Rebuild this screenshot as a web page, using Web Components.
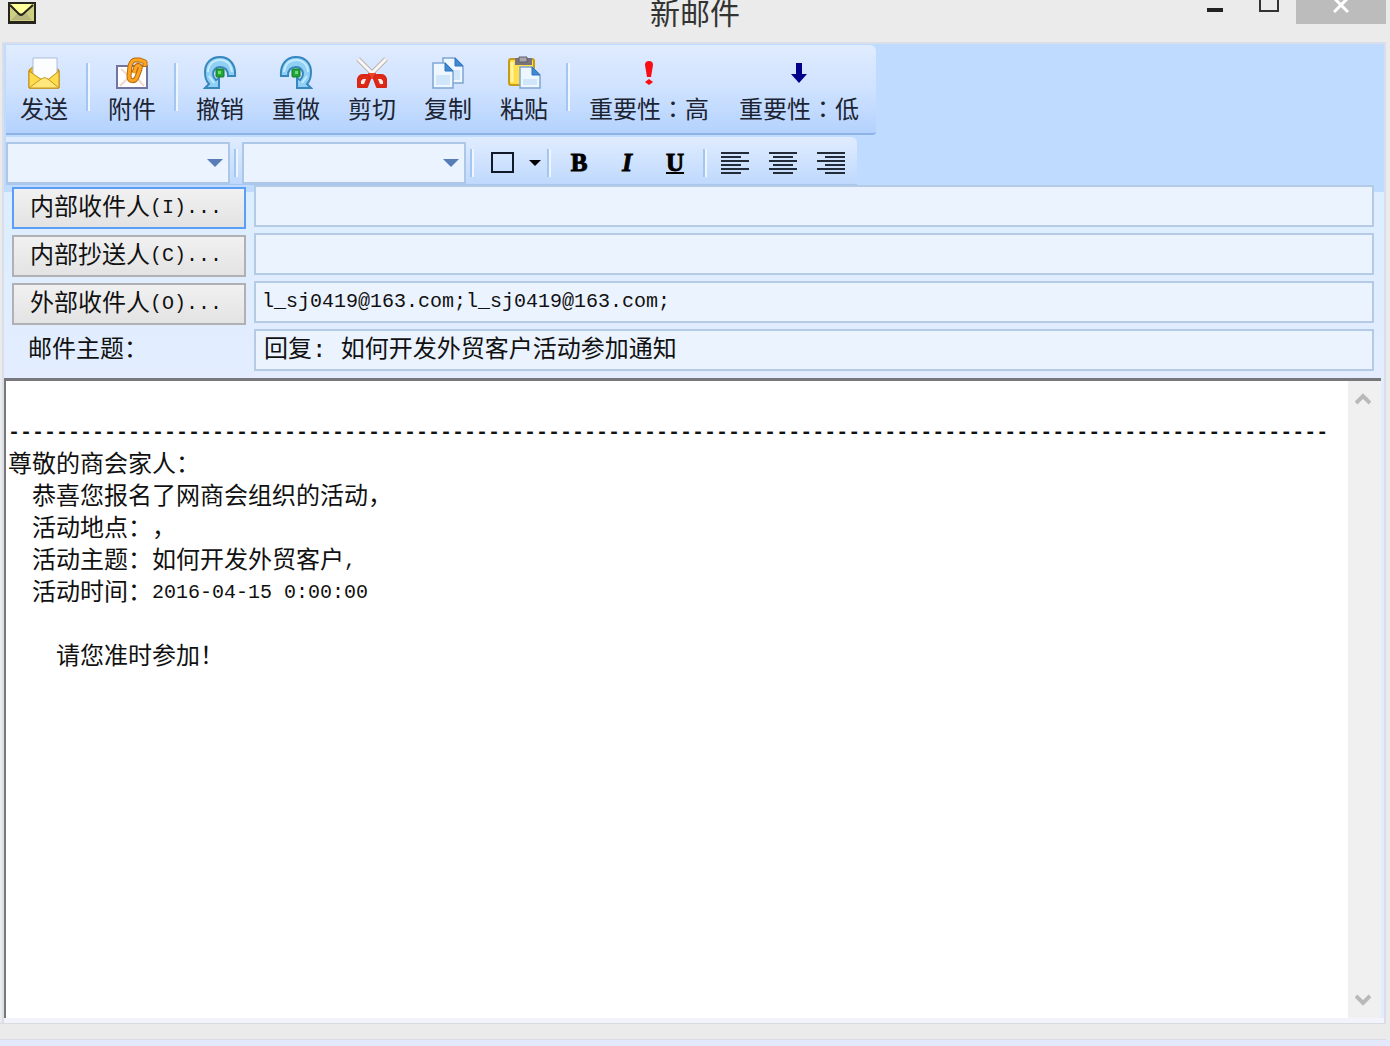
<!DOCTYPE html>
<html lang="zh-CN">
<head>
<meta charset="utf-8">
<title>新邮件</title>
<style>
html, body { margin: 0; height: 100%; }
body { background: #ebebeb; font-family: "Noto Sans CJK SC", sans-serif; color: #111; text-spacing-trim: space-all; }
</style>
</head>
<body>
<mail-window>
  <title-bar slot="title">新邮件</title-bar>
  <main-toolbar slot="tools"></main-toolbar>
  <format-toolbar slot="tools"></format-toolbar>
  <mail-field slot="fields" kind="button" label="内部收件人" key="(I)..." active></mail-field>
  <mail-field slot="fields" kind="button" label="内部抄送人" key="(C)..."></mail-field>
  <mail-field slot="fields" kind="button" label="外部收件人" key="(O)..." latin value="l_sj0419@163.com;l_sj0419@163.com;"></mail-field>
  <mail-field slot="fields" label="邮件主题：" value="回复: 如何开发外贸客户活动参加通知"></mail-field>
  <mail-editor slot="editor"></mail-editor>
</mail-window>

<script>
const define = (name, html, setup) => {
  const template = document.createElement('template');
  template.innerHTML = html;
  customElements.define(name, class extends HTMLElement {
    connectedCallback() {
      if (this.shadowRoot) return;
      const root = this.attachShadow({ mode: 'open' });
      root.append(template.content.cloneNode(true));
      if (setup) setup(this, root);
    }
  });
};

const svg = (w, h, body) => `<svg width="${w}" height="${h}" viewBox="0 0 ${w} ${h}" aria-hidden="true">${body}</svg>`;

const undoShape = `
  <path d="M2 16C2 7 8 1 17 1c9 0 16 7 15 19h-7c0-6-3-9-8-9-4 0-7 3-7 7 0 2 1 4 3 6l3-2v10H2l4-4c-3-3-4-7-4-12z" fill="#8fd0f4" stroke="#3787bd" stroke-width="2"/>
  <path d="M5 16C5 9 10 4 17 4c7 0 11 4 12 12M6 20l5 7" fill="none" stroke="#c4ebff" stroke-width="2"/>
  <rect x="13" y="13" width="8" height="8" rx="1" fill="#24a43c" stroke="#0c7a26"/><path d="M15 15h3v3h-3z" fill="#6edc70"/>`;

const page = (x, y, w, h) => `<path d="M${x} ${y}h${w - 8}l8 8v${h - 8}h-${w}z" fill="#eef7ff" stroke="#7fa5d3" stroke-width="1.5"/>
  <path d="M${x + w - 8} ${y}v8h8z" fill="#3e8bd3" stroke="#2c73bd"/><path d="M${x + 3} ${y + 12}h${w - 6}v${h - 15}h-${w - 6}z" fill="#cfe6fb"/>`;

const icons = {
  send: svg(32, 32, `<path d="M1 13 6 9h20l5 4v18H1z" fill="#e9b71f" stroke="#b98410"/>
    <path d="M5 1h24v17l-12 8L5 18z" fill="#fbfdff" stroke="#aebedb"/>
    <path d="M1 14l16 11 14-11v17H1z" fill="#ffdc4c" stroke="#c18d14"/>
    <path d="M1 31l12-9q4-3 7 0l11 9z" fill="#ffe77c" stroke="#c99719"/>`),
  attach: svg(32, 32, `<path d="M1 9h30v22H1z" fill="#fff" stroke="#7474a2" stroke-width="2"/><path d="M5 12l9 8M4 29l8-8M28 29l-7-8" fill="none" stroke="#f0d8cc" stroke-width="2"/>
    <g fill="none" stroke-linejoin="round"><path d="M29 10V5L24 3h-5c-3 0-4 3-5 6l-1 10c0 6 6 6 8 1l3-8c1-3-2-5-4-2l-2 6" stroke="#b86a10" stroke-width="5"/>
    <path d="M29 9V5L24 3h-5c-3 0-4 3-5 6l-1 10c0 6 6 6 8 1l3-8c1-3-2-5-4-2l-2 6" stroke="#ffa51e" stroke-width="3"/></g>`),
  undo: svg(34, 34, undoShape),
  redo: svg(34, 34, `<g transform="matrix(-1 0 0 1 34 0)">${undoShape}</g>`),
  cut: svg(34, 34, `<path d="M3 3l16 16M31 3L15 19" stroke="#b8b3b4" stroke-width="5"/><path d="M3 3l16 16M31 3L15 19" stroke="#faf7f5" stroke-width="3"/>
    <path d="M13 17h8v6h-8z" fill="#e8442e"/>
    <path d="M3 31v-8q1-4 5-4h4q3 0 3 4l-3 8zM31 31v-8q-1-4-5-4h-4q-3 0-3 4l3 8z" fill="#e02a18" stroke="#d92514" stroke-width="2" stroke-linejoin="round"/>
    <path d="M6 28v-3l2-2h3l-2 5zM28 28v-3l-2-2h-3l2 5z" fill="#fff0ec"/>`),
  copy: svg(34, 34, page(12, 2, 20, 25) + page(2, 7, 20, 25)),
  paste: svg(34, 34, `<rect x="2" y="3" width="25" height="26" rx="2" fill="#ffe04c" stroke="#c99a18" stroke-width="2"/><path d="M5 6v20" stroke="#fff5a5" stroke-width="3"/>
    <path d="M8 2h17v7H8z" fill="#77727c"/><path d="M12 1h8v5h-8z" fill="#aaa5aa" stroke="#625e66"/>` + page(13, 11, 20, 21)),
  high: svg(12, 28, `<path d="M2 6q0-4 4-4t4 4L8 18H4z" fill="#f80d12"/><path d="M6 20l4 3-4 3-4-3z" fill="#f80d12"/>`),
  low: svg(16, 28, `<path d="M5 4h6v11h5l-8 9-8-9h5z" fill="#00008b"/>`)
};

define('mail-window', `
  <style>
    :host { display: flex; flex-direction: column; min-height: 100vh; }
    .client { flex: 1; display: flex; flex-direction: column; margin: 0 4px 0 2px; border: solid #d9dee8; border-width: 2px 2px 0; background: #e0edff; }
    .tools { display: flex; flex-direction: column; align-items: flex-start; gap: 2px; padding: 1px 0 0 2px; background: #bfdbff; }
    .fields { display: flex; flex-direction: column; gap: 4px; padding: 0 10px 5px 8px; background: linear-gradient(#bfdbff 0 7px, #dceeff 7px, #e3edff); }
    .editor { flex: 1; display: flex; margin-right: 3px; }
    .edge { height: 5px; background: #f3f3fc; }
    .frame { height: 15px; margin-right: 4px; border: solid #d8dbe2; border-width: 1px 0; }
    .below { height: 6px; background: #e3e9fb; }
  </style>
  <slot name="title"></slot>
  <div class="client">
    <div class="tools"><slot name="tools"></slot></div>
    <div class="fields"><slot name="fields"></slot></div>
    <div class="editor"><slot name="editor"></slot></div>
    <div class="edge"></div>
  </div>
  <div class="frame"></div>
  <div class="below"></div>`);

define('title-bar', `
  <style>
    :host { display: grid; grid-template-columns: 1fr auto 1fr; align-items: start; height: 42px; }
    h1 { margin: 0; font-size: 30px; line-height: 22px; font-weight: 400; color: #333; }
    .icon { padding: 2px 0 0 8px; }
    .controls { display: flex; justify-content: flex-end; padding-right: 4px; }
    button { display: flex; justify-content: center; width: 54px; height: 24px; padding: 0; border: 0; background: none; }
    .close { width: 90px; background: #bcbcbc; }
    svg { display: block; }
  </style>
  <div class="icon">${svg(28, 22, `<path d="M0 0h28v22H0z" fill="#25251c"/><path d="M2 2h24v17H2z" fill="#cfcf83"/><path d="M3 2h21l-9 11h-3z" fill="#ffff9c"/><path d="M3 18l7-7h8l6 7z" fill="#b9b67c"/><path d="M2 3l9 9q2 2 4 0L25 3" fill="none" stroke="#27271e" stroke-width="2"/>`)}</div>
  <h1><slot></slot></h1>
  <div class="controls">
    <button aria-label="最小化">${svg(16, 24, '<path d="M0 8h16v4H0z" fill="#222"/>')}</button>
    <button aria-label="最大化">${svg(20, 24, '<path d="M1-4v15h18V-4" fill="none" stroke="#333" stroke-width="2"/>')}</button>
    <button class="close" aria-label="关闭">${svg(16, 24, '<path d="M1-2l14 14M15-2L1 12" stroke="#fff" stroke-width="3"/>')}</button>
  </div>`);

define('tool-separator', `
  <style>
    :host { display: flex; justify-content: center; flex: none; width: 12px; }
    i { width: 2px; border-right: 2px solid #edf5ff; background: #a5c6f1; }
  </style><i></i>`);

define('tool-button', `
  <style>
    :host { display: block; }
    button { display: flex; flex-direction: column; align-items: center; gap: 4px; padding: 11px 14px 0; border: 0; background: none; font: inherit; font-size: 24px; line-height: 28px; color: #1c2433; white-space: nowrap; }
    :host([wide]) button { padding: 11px 15px 0; }
    .icon { display: flex; align-items: center; justify-content: center; height: 34px; }
    svg { display: block; }
    .mid { font-family: "Noto Sans CJK TC", sans-serif; }
  </style>
  <button><span class="icon"></span><span class="text"></span></button>`,
  (host, root) => {
    root.querySelector('.icon').innerHTML = icons[host.getAttribute('icon')];
    root.querySelector('.text').innerHTML = host.getAttribute('label').replace('：', '<span class="mid" lang="zh-TW">：</span>');
  });

define('main-toolbar', `
  <style>
    :host { display: flex; height: 88px; padding-right: 2px; border-bottom: 2px solid #8db3e6; border-radius: 0 6px 4px 0; background: linear-gradient(#e0ecff, #cfe2ff 50%, #b3d2fd); }
    tool-separator { height: 48px; margin-top: 18px; }
  </style>
  <tool-button icon="send" label="发送"></tool-button>
  <tool-separator></tool-separator>
  <tool-button icon="attach" label="附件"></tool-button>
  <tool-separator></tool-separator>
  <tool-button icon="undo" label="撤销"></tool-button>
  <tool-button icon="redo" label="重做"></tool-button>
  <tool-button icon="cut" label="剪切"></tool-button>
  <tool-button icon="copy" label="复制"></tool-button>
  <tool-button icon="paste" label="粘贴"></tool-button>
  <tool-separator></tool-separator>
  <tool-button wide icon="high" label="重要性：高"></tool-button>
  <tool-button wide icon="low" label="重要性：低"></tool-button>`);

define('combo-box', `
  <style>
    :host { display: grid; width: 224px; height: 42px; }
    select, svg { grid-area: 1 / 1; }
    select { appearance: none; width: 100%; height: 100%; border: 2px solid #adc7e8; border-radius: 0; background: #ebf3fe; font: inherit; font-size: 20px; }
    svg { place-self: center end; margin-right: 7px; pointer-events: none; }
  </style>
  <select><option></option></select>
  ${svg(16, 8, '<path d="M0 0h16L8 8z" fill="#567db5"/>')}`,
  (host, root) => root.querySelector('select').setAttribute('aria-label', host.getAttribute('label')));

const lines = rows => svg(28, 24, rows.map(([x, w], i) => `<path d="M${x} ${1 + i * 4}h${w}v2h-${w}z" fill="#242b38"/>`).join(''));

define('format-toolbar', `
  <style>
    :host { display: flex; align-items: center; height: 42px; padding: 5px 2px 0 0; border-bottom: 1px solid #a9c6ee; border-radius: 0 6px 0 0; background: linear-gradient(#e0ecff, #bfd9fd); }
    tool-separator { height: 28px; }
    button { display: flex; align-items: center; justify-content: center; width: 48px; height: 40px; padding: 0; border: 0; background: none; font: 900 25px/32px "Liberation Serif", serif; color: #000; -webkit-text-stroke: 1px #000; }
    .colour { width: 65px; gap: 14px; padding-left: 10px; }
    u { text-decoration-thickness: 2px; }
    svg { display: block; flex: none; }
  </style>
  <combo-box label="字体"></combo-box>
  <tool-separator></tool-separator>
  <combo-box label="字号"></combo-box>
  <tool-separator></tool-separator>
  <button class="colour" aria-label="颜色">${svg(24, 22, '<path d="M1 1h21v19H1z" fill="none" stroke="#111827" stroke-width="2"/>')}${svg(12, 6, '<path d="M0 0h12L6 6z"/>')}</button>
  <tool-separator></tool-separator>
  <button><b>B</b></button>
  <button><i>I</i></button>
  <button><u>U</u></button>
  <tool-separator></tool-separator>
  <button aria-label="左对齐">${lines([[0, 28], [0, 20], [0, 28], [0, 20], [0, 28], [0, 20]])}</button>
  <button aria-label="居中">${lines([[0, 28], [4, 20], [0, 28], [4, 20], [0, 28], [4, 20]])}</button>
  <button aria-label="右对齐">${lines([[0, 28], [8, 20], [0, 28], [8, 20], [0, 28], [8, 20]])}</button>`);

define('mail-field', `
  <style>
    :host { display: grid; grid-template-columns: 234px 1fr; column-gap: 8px; height: 44px; }
    button, label { display: block; align-self: end; box-sizing: border-box; height: 42px; padding: 0 16px 6px; text-align: left; font: inherit; font-size: 24px; line-height: 32px; white-space: nowrap; color: #111; }
    button { border: 2px solid #b1b1b3; background: linear-gradient(#f1f1f1, #e3e3e3); }
    :host([active]) button { border-color: #5a9ff5; }
    button span { font-family: "Liberation Mono", monospace; font-size: 20px; line-height: 20px; vertical-align: 2px; }
    input { align-self: start; box-sizing: border-box; width: 100%; height: 42px; padding: 0 8px 8px; border: 2px solid #b5cae5; background: #ebf3fe; font: 24px/30px "Liberation Mono", "Noto Sans CJK SC", monospace; color: #111; }
    :host([latin]) input { padding: 0 6px 2px; font-size: 20px; }
  </style>`,
  (host, root) => {
    const isButton = host.getAttribute('kind') === 'button';
    const label = document.createElement(isButton ? 'button' : 'label');
    label.id = 'name';
    label.textContent = host.getAttribute('label');
    if (isButton) {
      const key = document.createElement('span');
      key.textContent = host.getAttribute('key');
      label.append(key);
    } else {
      label.htmlFor = 'box';
    }
    const input = document.createElement('input');
    input.id = 'box';
    input.value = host.getAttribute('value') || '';
    input.setAttribute('aria-labelledby', 'name');
    root.append(label, input);
  });

define('mail-editor', `
  <style>
    :host { flex: 1; display: flex; border: solid #77777c; border-width: 3px 0 0 2px; background: #fff; }
    .text { flex: 1; min-width: 0; overflow: hidden; padding: 1px 0 0 2px; outline: 0; font-size: 24px; line-height: 32px; color: #111; }
    p { margin: 0; height: 32px; white-space: pre; }
    span { font-family: "Liberation Mono", monospace; font-size: 20px; line-height: 20px; vertical-align: 2px; }
    .rule span { font-weight: 700; }
    .bar { display: flex; flex-direction: column; justify-content: space-between; width: 33px; background: #f0f0f0; }
    button { display: flex; align-items: center; justify-content: center; width: 30px; height: 36px; padding: 0; border: 0; background: none; }
  </style>
  <div class="text" contenteditable="true" role="textbox" aria-multiline="true" aria-label="正文" spellcheck="false"><p></p><p class="rule"><span>${'-'.repeat(110)}</span></p><p>尊敬的商会家人：</p><p><span>  </span>恭喜您报名了网商会组织的活动，</p><p><span>  </span>活动地点：，</p><p><span>  </span>活动主题：如何开发外贸客户<span>,</span></p><p><span>  </span>活动时间：<span>2016-04-15 0:00:00</span></p><p></p><p><span>    </span>请您准时参加！</p></div>
  <div class="bar">
    <button aria-label="向上滚动">${svg(16, 12, '<path d="M1 10l7-7 7 7" fill="none" stroke="#b9b9b9" stroke-width="4"/>')}</button>
    <button aria-label="向下滚动">${svg(16, 12, '<path d="M1 2l7 7 7-7" fill="none" stroke="#b9b9b9" stroke-width="4"/>')}</button>
  </div>`);
</script>
</body>
</html>
